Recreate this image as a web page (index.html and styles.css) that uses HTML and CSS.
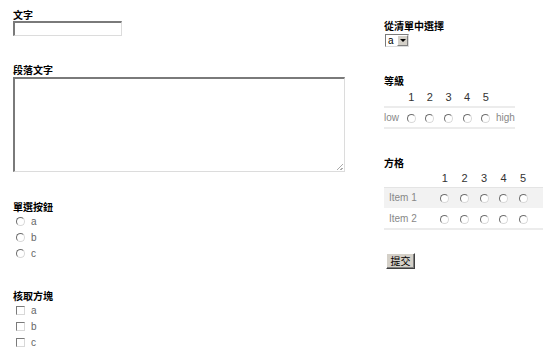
FILE: index.html
```html
<!DOCTYPE html>
<html lang="zh-Hant">
<head>
    <meta charset="UTF-8">
    <meta name="viewport" content="width=device-width, initial-scale=1.0">
    <title>表單</title>
    <link rel="stylesheet" href="styles.css">
</head>
<body>
    <div class="formulaire">
        <div class="colonne gauche">
            <div class="champ champ-texte">
                <div class="titre">文字</div>
                <div class="saisie"></div>
            </div>
            <div class="champ champ-para">
                <div class="titre">段落文字</div>
                <div class="zone"><span class="poignee"></span></div>
            </div>
            <div class="champ champ-radio">
                <div class="titre">單選按鈕</div>
                <div class="option"><span class="rond"></span>a</div>
                <div class="option"><span class="rond"></span>b</div>
                <div class="option"><span class="rond"></span>c</div>
            </div>
            <div class="champ champ-case">
                <div class="titre">核取方塊</div>
                <div class="option"><span class="carre"></span>a</div>
                <div class="option"><span class="carre"></span>b</div>
                <div class="option"><span class="carre"></span>c</div>
            </div>
        </div>
        <div class="colonne droite">
            <div class="champ champ-liste">
                <div class="titre">從清單中選擇</div>
                <div class="liste"><span class="valeur">a</span><span class="fleche"></span></div>
            </div>
            <div class="champ champ-echelle">
                <div class="titre">等級</div>
                <table class="echelle">
                    <tr class="entete">
                        <td class="bout"></td>
                        <td>1</td><td>2</td><td>3</td><td>4</td><td>5</td>
                        <td class="bout"></td>
                    </tr>
                    <tr class="ligne">
                        <td class="bout">low</td>
                        <td><span class="rond"></span></td>
                        <td><span class="rond"></span></td>
                        <td><span class="rond"></span></td>
                        <td><span class="rond"></span></td>
                        <td><span class="rond"></span></td>
                        <td class="bout haut">high</td>
                    </tr>
                </table>
            </div>
            <div class="champ champ-grille">
                <div class="titre">方格</div>
                <table class="grille">
                    <tr class="entete">
                        <td class="item"></td>
                        <td>1</td><td>2</td><td>3</td><td>4</td><td>5</td>
                        <td class="reste"></td>
                    </tr>
                    <tr class="ligne grise">
                        <td class="item">Item 1</td>
                        <td><span class="rond"></span></td>
                        <td><span class="rond"></span></td>
                        <td><span class="rond"></span></td>
                        <td><span class="rond"></span></td>
                        <td><span class="rond"></span></td>
                        <td class="reste"></td>
                    </tr>
                    <tr class="ligne">
                        <td class="item">Item 2</td>
                        <td><span class="rond"></span></td>
                        <td><span class="rond"></span></td>
                        <td><span class="rond"></span></td>
                        <td><span class="rond"></span></td>
                        <td><span class="rond"></span></td>
                        <td class="reste"></td>
                    </tr>
                </table>
            </div>
            <div class="envoi">
                <button class="bouton">提交</button>
            </div>
        </div>
    </div>
</body>
</html>
```

FILE: styles.css
```css
*{
    padding: 0;
    margin: 0;
    box-sizing: border-box;
}
body{
    background-color: #ffffff;
    font-family: "Liberation Sans", "Noto Sans CJK TC", sans-serif;
    color: #000;
}
.formulaire{
    display: flex;
    padding-top: 9px;
}
.colonne.gauche{
    width: 384px;
    padding-left: 13px;
}
.colonne.droite{
    width: 169px;
    padding-top: 11px;
}
.titre{
    font-family: "Noto Sans CJK TC", sans-serif;
    font-weight: bold;
    font-size: 10px;
    line-height: 12px;
    height: 12px;
}
.saisie{
    width: 109px;
    height: 15px;
    border: 1px solid #dcdcdc;
    border-top: 2px solid #7a7a7a;
    border-left: 2px solid #7a7a7a;
    background: #fff;
}
.champ-para{
    margin-top: 28px;
}
.zone{
    position: relative;
    width: 332px;
    height: 95px;
    margin-top: 1px;
    border: 1px solid #dcdcdc;
    border-top: 2px solid #7a7a7a;
    border-left: 2px solid #7a7a7a;
}
.poignee{
    position: absolute;
    right: 1px;
    bottom: 1px;
    width: 6px;
    height: 6px;
    background: linear-gradient(135deg, transparent 45%, #aaa 45%, #aaa 55%, transparent 55%, transparent 75%, #aaa 75%, #aaa 85%, transparent 85%);
}
.champ-radio{
    margin-top: 29px;
}
.champ-case{
    margin-top: 29px;
}
.option{
    display: flex;
    align-items: center;
    height: 16px;
    padding-left: 3px;
    font-size: 10px;
    color: #666;
}
.rond{
    display: inline-block;
    width: 9px;
    height: 9px;
    border-radius: 50%;
    border: 1px solid;
    border-color: #6e6e6e #d8d8d8 #d8d8d8 #6e6e6e;
    background: #fff;
}
.option .rond,
.option .carre{
    margin-right: 6px;
}
.carre{
    display: inline-block;
    width: 9px;
    height: 9px;
    border: 1px solid;
    border-color: #7a7a7a #d8d8d8 #d8d8d8 #7a7a7a;
    background: #fff;
}
.liste{
    display: flex;
    width: 24px;
    height: 13px;
    margin-top: 2px;
    margin-left: 1px;
    border: 1px solid;
    border-color: #7a7a7a #dcdcdc #dcdcdc #7a7a7a;
    font-size: 10px;
    line-height: 11px;
}
.valeur{
    width: 11px;
    padding-left: 2px;
    background: #fff;
}
.fleche{
    position: relative;
    width: 11px;
    background: #d4d0c8;
    border: 1px solid;
    border-color: #fff #808080 #808080 #fff;
}
.fleche::after{
    content: "";
    position: absolute;
    left: 2px;
    top: 3px;
    border-left: 3px solid transparent;
    border-right: 3px solid transparent;
    border-top: 3px solid #000;
}
.champ-echelle{
    margin-top: 28px;
}
table{
    border-collapse: collapse;
    font-size: 11px;
}
.echelle{
    width: 131px;
    margin-top: 1px;
}
.echelle td{
    width: 19px;
    text-align: center;
    padding: 0;
}
.echelle .bout{
    width: 18px;
    text-align: left;
    color: #888;
    font-size: 10px;
}
.echelle .haut{
    width: 17px;
    padding-left: 1px;
}
.echelle .entete td{
    height: 19px;
    color: #333;
    border-bottom: 2px solid #ececec;
}
.echelle .ligne td{
    height: 21px;
    border-bottom: 2px solid #ececec;
}
.echelle .ligne .rond,
.grille .ligne .rond{
    vertical-align: middle;
}
.champ-grille{
    margin-top: 28px;
}
.grille{
    width: 159px;
    margin-top: 1px;
}
.grille td{
    width: 19.5px;
    text-align: center;
    padding: 0;
}
.grille .item{
    width: 51px;
    text-align: left;
    padding-left: 5px;
    color: #888;
    font-size: 10px;
}
.grille .reste{
    width: 10px;
}
.grille .entete td{
    height: 17px;
    color: #333;
    border-bottom: 1px solid #e4e4e4;
}
.grille .ligne td{
    height: 21px;
    border-bottom: 2px solid #ececec;
}
.grille .grise td{
    background: #f2f2f2;
    border-bottom: 1px solid #fff;
}
.envoi{
    margin-top: 21px;
}
.bouton{
    margin-left: 2px;
    width: 29px;
    height: 16px;
    font-family: "Noto Sans CJK TC", sans-serif;
    font-size: 10px;
    line-height: 12px;
    background: #d4d0c8;
    border: 1px solid;
    border-color: #fff #404040 #404040 #fff;
    box-shadow: inset -1px -1px #808080;
}
```
